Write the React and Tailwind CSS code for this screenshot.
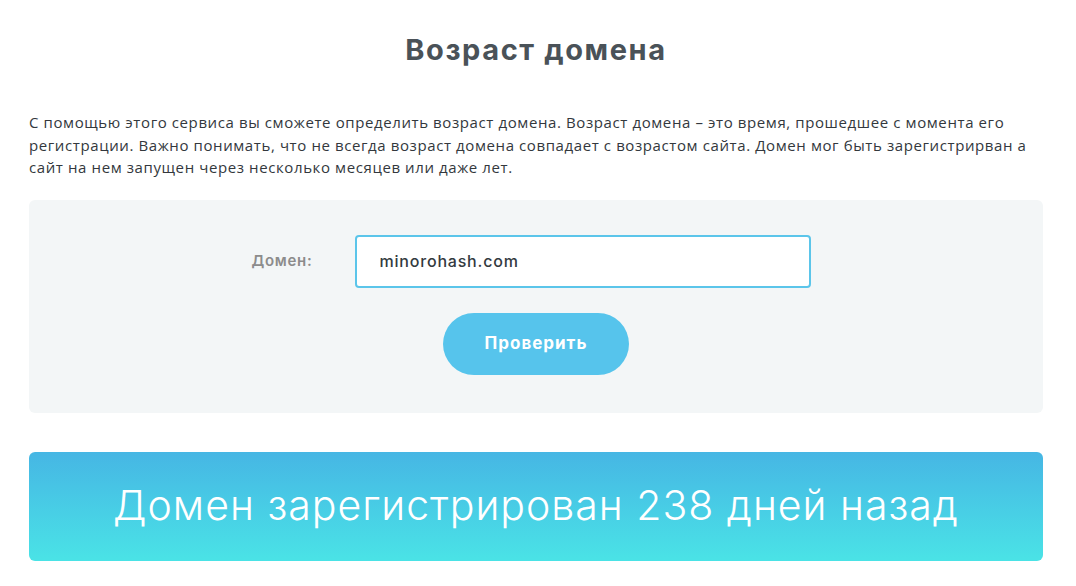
import React, { useState } from "react";

export default function App() {
  const [domain, setDomain] = useState("minorohash.com");

  return (
    <div
      className="w-full min-h-[586px] bg-white px-[29px] pt-[32px]"
      style={{ fontFamily: "Inter, 'Noto Sans', sans-serif" }}
    >
      <div className="w-[1014px]">
        {/* Title */}
        <h1 className="text-center text-[29px] leading-[36px] font-bold text-[#4a5258] tracking-[1.6px]">
          Возраст домена
        </h1>

        {/* Description */}
        <p
          className="mt-[43px] text-[15px] leading-[22.5px] text-[#33383d] tracking-[0.6px]"
          style={{ fontFamily: "'Open Sans', 'Noto Sans', sans-serif" }}
        >
          С помощью этого сервиса вы сможете определить возраст домена. Возраст
          домена – это время, прошедшее с момента его
          <br />
          регистрации. Важно понимать, что не всегда возраст домена совпадает с
          возрастом сайта. Домен мог быть зарегистрирван а
          <br />
          сайт на нем запущен через несколько месяцев или даже лет.
        </p>

        {/* Form */}
        <div className="mt-[21px] h-[213px] rounded-md bg-[#f3f6f7] pt-[35px] flex flex-col items-center">
          <div className="flex items-center">
            <label className="w-[103px] text-[15px] font-semibold text-[#8c8c8c] ml-[-10px] tracking-[0.7px]">
              Домен:
            </label>
            <input
              value={domain}
              onChange={(e) => setDomain(e.target.value)}
              className="w-[456px] h-[53px] rounded border-2 border-[#5bc5ea] bg-white px-[23px] text-[16px] font-medium text-[#333a40] tracking-[0.8px] focus:outline-none"
            />
          </div>
          <button className="mt-[25px] w-[186px] h-[62px] rounded-full bg-[#56c4ec] text-white text-[17px] font-bold tracking-[1px]">
            Проверить
          </button>
        </div>

        {/* Result */}
        <div className="mt-[39px] h-[109px] rounded-md bg-gradient-to-b from-[#46b6e4] to-[#4ae3e6] flex items-center justify-center">
          <span className="text-white text-[41px] font-light tracking-[1px]">
            Домен зарегистрирован 238 дней назад
          </span>
        </div>
      </div>
    </div>
  );
}
